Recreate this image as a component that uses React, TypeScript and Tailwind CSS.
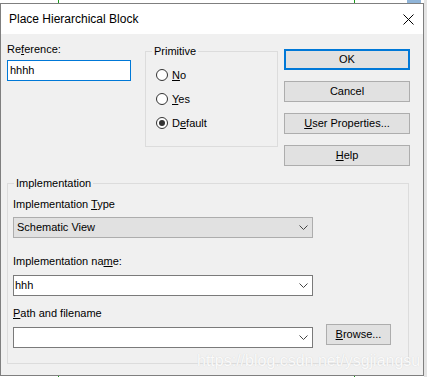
import React from 'react';

const Chevron: React.FC = () => (
  <svg width="9" height="5" viewBox="0 0 9 5" className="shrink-0">
    <polyline points="0.5,0.5 4.5,4.5 8.5,0.5" fill="none" stroke="#444" strokeWidth="1" />
  </svg>
);

const Radio: React.FC<{ checked?: boolean; children: React.ReactNode }> = ({ checked, children }) => (
  <div className="flex h-[24px] items-center gap-[4px]">
    <span className="flex h-[12px] w-[12px] items-center justify-center rounded-full border border-[#333] bg-white">
      {checked && <span className="h-[6px] w-[6px] rounded-full bg-[#333]"></span>}
    </span>
    <span>{children}</span>
  </div>
);

const Button: React.FC<{ primary?: boolean; className?: string; children: React.ReactNode }> = ({ primary, className, children }) => (
  <div
    className={
      'flex h-[21px] items-center justify-center bg-[#e1e1e1] ' +
      (primary ? 'border-2 border-[#0078d7] ' : 'border border-[#adadad] ') +
      (className ?? '')
    }
  >
    {children}
  </div>
);

const Combo: React.FC<{ value?: string }> = ({ value }) => (
  <div className="flex h-[21px] w-[300px] items-center justify-between border border-[#7a7a7a] bg-white pl-[1px] pr-[4px]">
    <span>{value}</span>
    <Chevron />
  </div>
);

export default function App() {
  return (
    <div
      className="relative h-[377px] w-[427px] overflow-hidden bg-white pt-[3px] text-[11px] leading-[13px] text-black"
      style={{ fontFamily: '"Liberation Sans", Arial, sans-serif' }}
    >
      {/* canvas behind the dialog */}
      <div className="absolute left-[58px] top-0 h-full w-px bg-[#1a9a1a]"></div>
      <div className="absolute left-[354px] top-0 h-full w-px bg-[#1a9a1a]"></div>
      <div className="absolute left-[407px] top-0 h-[4px] w-[14px] bg-[#8fb4d8]"></div>
      <div className="absolute right-0 top-0 h-full w-[3px] bg-[#e4e4e4]"></div>

      <div className="relative flex h-[373px] w-[424px] flex-col border border-[#7f7f7f] bg-[#f0f0f0]">
        <div className="flex h-[30px] shrink-0 items-center justify-between bg-white pl-[8px] pr-[9px]">
          <span className="text-[12px]">Place Hierarchical Block</span>
          <svg width="11" height="11" viewBox="0 0 11 11">
            <path d="M0.5 0.5 L10.5 10.5 M10.5 0.5 L0.5 10.5" stroke="#000" strokeWidth="1" />
          </svg>
        </div>

        <div className="pl-[6px]">
          <div className="flex items-start">
            <div className="mt-[9px] w-[124px]">
              <div>
                Re<u className="underline-offset-1">f</u>erence:
              </div>
              <div className="mt-[4px] flex h-[21px] items-center border border-[#0078d7] bg-white pl-[2px]">hhhh</div>
            </div>

            <fieldset className="ml-[14px] mt-[11px] h-[102px] w-[133px] border border-[#dcdcdc]">
              <legend className="ml-[6px] px-[2px]">Primitive</legend>
              <div className="pl-[10px] pt-[5px]">
                <Radio>
                  <u className="underline-offset-1">N</u>o
                </Radio>
                <Radio>
                  <u className="underline-offset-1">Y</u>es
                </Radio>
                <Radio checked>
                  D<u className="underline-offset-1">e</u>fault
                </Radio>
              </div>
            </fieldset>

            <div className="ml-[6px] mt-[15px] flex w-[126px] flex-col gap-[11px]">
              <Button primary>OK</Button>
              <Button>Cancel</Button>
              <Button>
                <span>
                  <u className="underline-offset-1">U</u>ser Properties...
                </span>
              </Button>
              <Button>
                <span>
                  <u className="underline-offset-1">H</u>elp
                </span>
              </Button>
            </div>
          </div>

          <fieldset className="mt-[11px] w-[402px] border border-[#dcdcdc]">
            <legend className="ml-[6px] px-[2px]">Implementation</legend>
            <div className="pb-[15px] pl-[5px]">
              <div className="mt-[8px]">
                Implementation <u className="underline-offset-1">T</u>ype
              </div>
              <div className="mt-[6px] flex h-[21px] w-[300px] items-center justify-between border border-[#adadad] bg-[#e1e1e1] pl-[3px] pr-[4px]">
                <span>Schematic View</span>
                <Chevron />
              </div>

              <div className="mt-[17px]">
                Implementation na<u className="underline-offset-1">m</u>e:
              </div>
              <div className="mt-[7px]">
                <Combo value="hhh" />
              </div>

              <div className="mt-[11px]">
                <u className="underline-offset-1">P</u>ath and filename
              </div>
              <div className="mt-[4px] flex items-start">
                <div className="mt-[3px]">
                  <Combo />
                </div>
                <Button className="ml-[13px] w-[65px]">
                  <span>
                    <u className="underline-offset-1">B</u>rowse...
                  </span>
                </Button>
              </div>
            </div>
          </fieldset>
        </div>

        <div className="absolute left-[196px] top-[347px] text-[16px] leading-[20px] text-[#fafafa] [text-shadow:0_0_1px_#cfcfcf]">
          https://blog.csdn.net/ysgjiangsu
        </div>
      </div>
    </div>
  );
}
